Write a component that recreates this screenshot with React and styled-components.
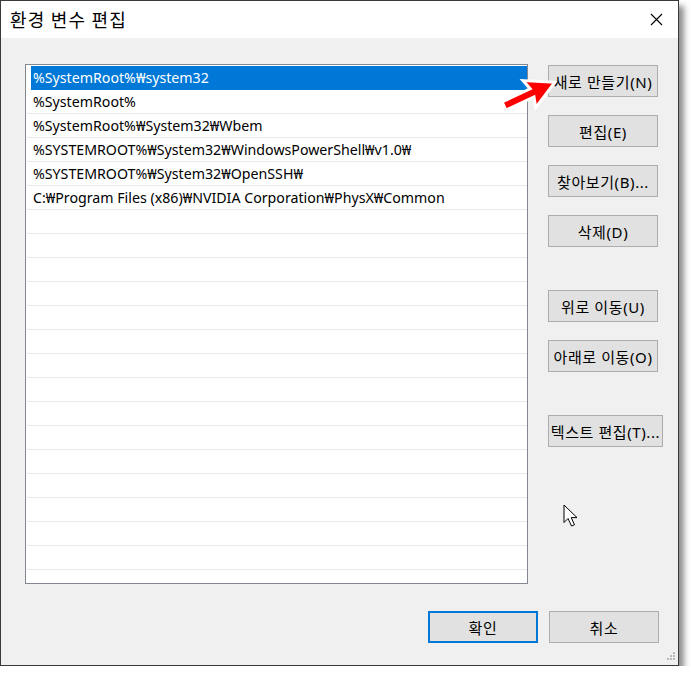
import styled, { createGlobalStyle } from "styled-components";

const GlobalStyle = createGlobalStyle`
  body {
    margin: 0;
    background: #ffffff;
    font-family: "Noto Sans", "Noto Sans CJK KR", sans-serif;
  }
`;

const Window = styled.div`
  position: relative;
  width: 677px;
  height: 664px;
  border: 1px solid #3a3a3a;
  background: #f0f0f0;
  box-shadow: 5px 6px 6px rgba(0, 0, 0, 0.45);
  display: flex;
  flex-direction: column;
`;

const TitleBar = styled.div`
  height: 37px;
  background: #ffffff;
  display: flex;
  align-items: center;
  justify-content: space-between;
  padding: 0 15px 0 9px;
`;

const Title = styled.span`
  font-family: "Noto Sans CJK KR", sans-serif;
  font-size: 18px;
  letter-spacing: 1.2px;
  color: #000;
  margin-top: -1px;
`;

const Body = styled.div`
  flex: 1;
  display: flex;
  flex-direction: column;
  padding: 26px 19px 0 24px;
`;

const TopRow = styled.div`
  display: flex;
  align-items: flex-start;
`;

const ListBox = styled.div`
  flex-shrink: 0;
  width: 501px;
  height: 517px;
  border: 1px solid #828790;
  background: #fff;
  padding-top: 1px;
  overflow: hidden;
`;

const Row = styled.div`
  height: 23px;
  margin-left: ${(p) => (p.$selected ? "5px" : "1px")};
  padding-left: ${(p) => (p.$selected ? "2px" : "6px")};
  border-bottom: 1px solid ${(p) => (p.$selected ? "#0078d7" : "#e9e9e9")};
  background: ${(p) => (p.$selected ? "#0078d7" : "transparent")};
  color: ${(p) => (p.$selected ? "#fff" : "#000")};
  font-size: 14.2px;
  line-height: 23px;
  white-space: nowrap;
`;

const ButtonColumn = styled.div`
  flex-shrink: 0;
  display: flex;
  flex-direction: column;
  align-items: flex-start;
  margin-left: 20px;
  margin-top: 1px;
`;

const Button = styled.button`
  flex-shrink: 0;
  width: ${(p) => p.$w || 110}px;
  height: 32px;
  margin-top: ${(p) => p.$gap || 0}px;
  background: #e1e1e1;
  border: ${(p) => (p.$default ? "2px solid #0078d7" : "1px solid #adadad")};
  font-family: "Noto Sans", "Noto Sans CJK KR", sans-serif;
  font-size: 15px;
  letter-spacing: 0.6px;
  color: #000;
  padding: 0;
  white-space: nowrap;
`;

const Footer = styled.div`
  display: flex;
  justify-content: flex-end;
  gap: 11px;
  margin-top: 27px;
`;

const Overlay = styled.svg`
  position: absolute;
  pointer-events: none;
`;

const CloseIcon = () => (
  <svg width="13" height="13" viewBox="0 0 13 13">
    <path d="M1 1 L12 12 M12 1 L1 12" stroke="#000" strokeWidth="1.1" />
  </svg>
);

const rows = [
  "%SystemRoot%₩system32",
  "%SystemRoot%",
  "%SystemRoot%₩System32₩Wbem",
  "%SYSTEMROOT%₩System32₩WindowsPowerShell₩v1.0₩",
  "%SYSTEMROOT%₩System32₩OpenSSH₩",
  "C:₩Program Files (x86)₩NVIDIA Corporation₩PhysX₩Common",
];

const buttons = [
  { label: "새로 만들기(N)", gap: 0 },
  { label: "편집(E)", gap: 18 },
  { label: "찾아보기(B)...", gap: 18 },
  { label: "삭제(D)", gap: 18 },
  { label: "위로 이동(U)", gap: 43 },
  { label: "아래로 이동(O)", gap: 18 },
  { label: "텍스트 편집(T)...", gap: 43, w: 115 },
];

export default function App() {
  const allRows = [...rows, ...Array(16).fill("")];
  return (
    <>
      <GlobalStyle />
      <Window>
        <TitleBar>
          <Title>환경 변수 편집</Title>
          <CloseIcon />
        </TitleBar>
        <Body>
          <TopRow>
            <ListBox>
              {allRows.map((r, i) => (
                <Row key={i} $selected={i === 0}>
                  {r}
                </Row>
              ))}
            </ListBox>
            <ButtonColumn>
              {buttons.map((b) => (
                <Button key={b.label} $gap={b.gap} $w={b.w}>
                  {b.label}
                </Button>
              ))}
            </ButtonColumn>
          </TopRow>
          <Footer>
            <Button $default>확인</Button>
            <Button>취소</Button>
          </Footer>
        </Body>

        {/* red annotation arrow */}
        <Overlay
          width="70"
          height="50"
          viewBox="0 0 70 50"
          style={{ left: 496, top: 66 }}
        >
          <g transform="translate(7 39) rotate(-25)">
            <path
              d="M0 -4.5 L31 -4.5 L28 -15 L56 0 L28 15 L31 4.5 L0 4.5 Z"
              fill="#ff0000"
              stroke="#ffffff"
              strokeWidth="3"
              strokeLinejoin="miter"
            />
          </g>
        </Overlay>

        {/* mouse cursor */}
        <Overlay
          width="18"
          height="24"
          viewBox="0 0 18 24"
          style={{ left: 562, top: 503 }}
        >
          <path
            d="M1 1 V18.5 L5 14.5 L8.5 22 L11.5 20.8 L8.2 13.6 L14 13.6 Z"
            fill="#ffffff"
            stroke="#000"
            strokeWidth="1"
            strokeLinejoin="round"
          />
        </Overlay>

        {/* resize grip */}
        <Overlay
          width="14"
          height="14"
          viewBox="0 0 14 14"
          style={{ right: 2, bottom: 1 }}
        >
          {[
            [9, 0],
            [6, 3],
            [9, 3],
            [3, 6],
            [6, 6],
            [9, 6],
          ].map(([x, y]) => (
            <rect key={`${x}-${y}`} x={x + 2} y={y + 2} width="2" height="2" fill="#b8b8b8" />
          ))}
        </Overlay>
      </Window>
    </>
  );
}
